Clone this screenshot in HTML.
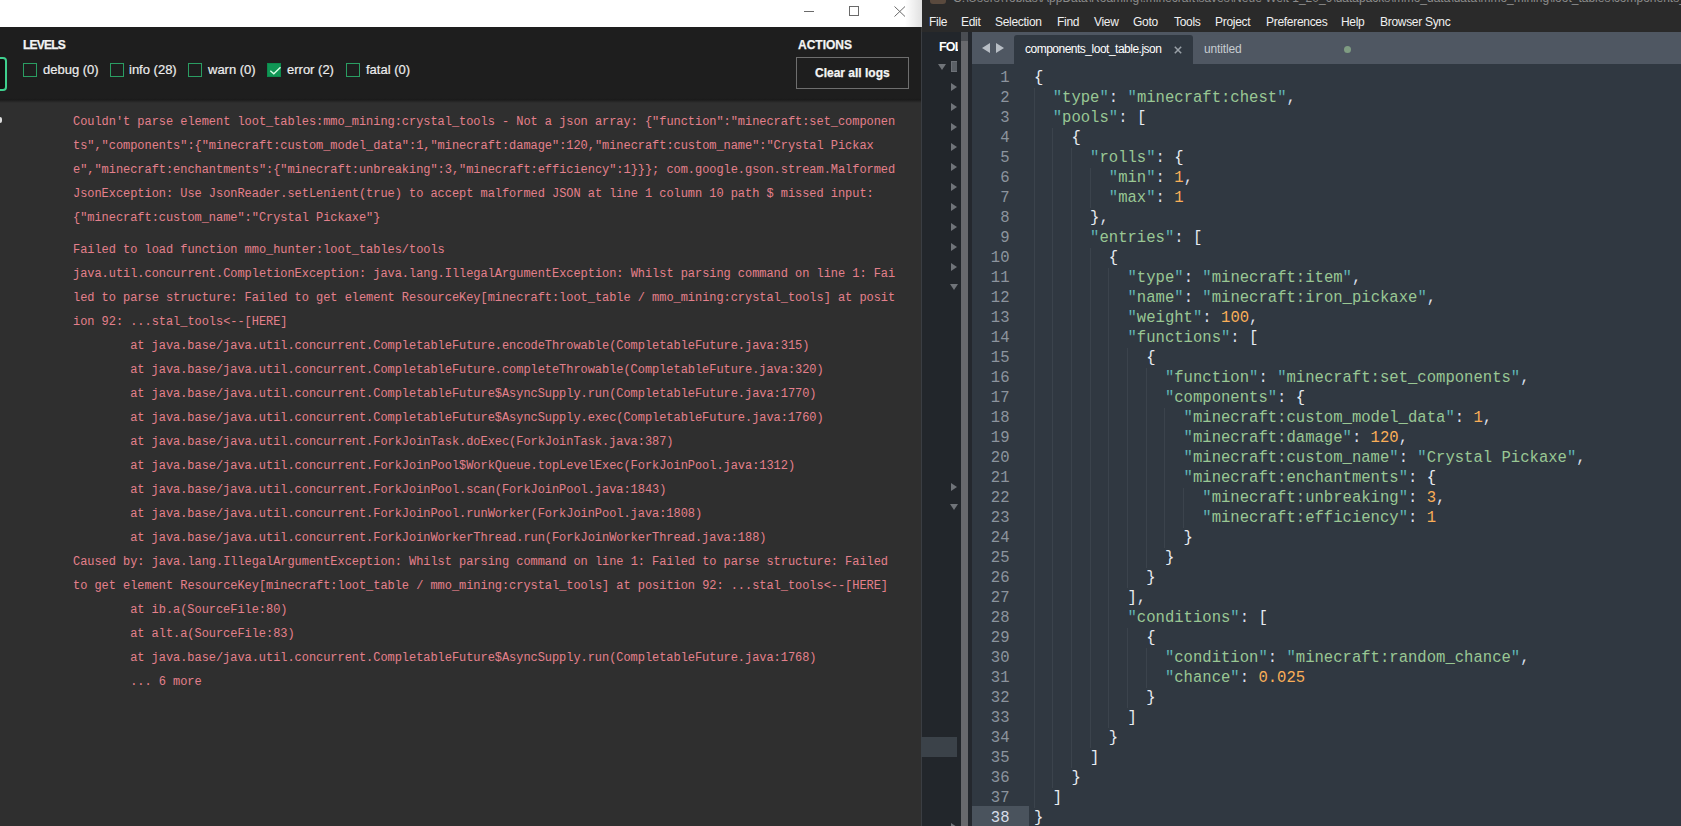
<!DOCTYPE html>
<html><head><meta charset="utf-8">
<style>
*{margin:0;padding:0;box-sizing:border-box}
html,body{width:1681px;height:826px;overflow:hidden;background:#1f1f1f}
body{position:relative;font-family:"Liberation Sans",sans-serif}
.a{position:absolute}
/* left window */
#ltitle{left:0;top:0;width:922px;height:27px;background:#fff}
#lhead{left:0;top:27px;width:921px;height:73px;background:#1e1e1e}
#llog{left:0;top:100px;width:921px;height:726px;background:#2f2f2f}
#lshadow{left:0;top:98px;width:921px;height:5px;background:linear-gradient(#1e1e1e,#1b1b1b 35%,#2f2f2f)}
#lborder{left:921px;top:27px;width:1px;height:799px;background:#3b3b3b}
.ll{position:absolute;white-space:pre;font-family:"Liberation Mono",monospace;font-size:12px;letter-spacing:-0.052px;line-height:24px;color:#e4808c}
.cb{position:absolute;top:63px;width:14px;height:14px;border:1px solid #2a9d62}
.cbl{position:absolute;top:60px;-webkit-text-stroke:0.2px #ededed;font-size:13px;line-height:20px;color:#ededed}
.hd{position:absolute;font-weight:bold;font-size:12px;line-height:14px;color:#f4f4f4;-webkit-text-stroke:0.25px #f4f4f4}
/* sublime */
#stitle{left:922px;top:0;width:759px;height:32px;background:#2a2a2a}
.mn{position:absolute;top:15px;font-size:12px;letter-spacing:-0.3px;line-height:14px;color:#f0f0f0}
#side{left:922px;top:32px;width:39px;height:794px;background:#22262b}
#sidel{left:921px;top:32px;width:1px;height:794px;background:#3a3d42}
#sbar{left:961px;top:32px;width:7px;height:794px;background:#68696d}
#sbar2{left:968px;top:32px;width:4px;height:794px;background:#24282e}
#tabs{left:972px;top:32px;width:709px;height:32px;background:#4f5762}
#editor{left:972px;top:64px;width:709px;height:762px;background:#303841}
#tab1{left:1014px;top:35px;width:179px;height:29px;background:#303841;border-radius:3px 3px 0 0}
.cl{position:absolute;white-space:pre;font-family:"Liberation Mono",monospace;font-size:15.58px;line-height:20px;color:#d8dee9}
.cl i{font-style:normal}
.q{color:#5fb4b4}.s{color:#99c794}.n{color:#f9ae58}.p{color:#d8dee9}.b{color:#e8ecf2}
.ln{position:absolute;left:972px;width:37.5px;text-align:right;white-space:pre;font-family:"Liberation Mono",monospace;font-size:15.58px;line-height:20px;color:#8c949e}
.ln.cur{color:#d8dee9}
#curln{left:972px;top:806px;width:57px;height:20px;background:#4a535d}
.g{position:absolute;width:1px;height:20px;background:#3b434c}
.tr{position:absolute;left:951px;width:0;height:0;border-top:4px solid transparent;border-bottom:4px solid transparent;border-left:6px solid #707479}
.td{position:absolute;width:0;height:0;border-left:4px solid transparent;border-right:4px solid transparent;border-top:6px solid #707479}
</style></head><body>
<!-- LEFT WINDOW -->
<div class="a" id="ltitle"></div>
<div class="a" style="left:804px;top:11px;width:10px;height:1px;background:#6a6a6a"></div>
<div class="a" style="left:849px;top:6px;width:10px;height:10px;border:1px solid #6a6a6a"></div>
<svg class="a" style="left:894px;top:6px" width="12" height="11" viewBox="0 0 12 11"><path d="M0.5 0.5L11 10.5M11 0.5L0.5 10.5" stroke="#6a6a6a" stroke-width="1" fill="none"/></svg>
<div class="a" style="left:905px;top:0;width:17px;height:27px;background:linear-gradient(90deg,rgba(0,0,0,0),rgba(0,0,0,0.12))"></div>
<div class="a" id="lhead"></div>
<div class="a" style="left:0;top:57px;width:7px;height:34px;border:2px solid #3fcf8e;border-left:none;border-radius:0 4px 4px 0;background:#111"></div>
<div class="hd" style="left:23px;top:38px;letter-spacing:-0.8px">LEVELS</div>
<div class="cb" style="left:23px"></div><div class="cbl" style="left:43px">debug (0)</div>
<div class="cb" style="left:110px"></div><div class="cbl" style="left:129px">info (28)</div>
<div class="cb" style="left:188px"></div><div class="cbl" style="left:208px">warn (0)</div>
<div class="cb" style="left:267px;background:#109655;border-color:#0c8a4c"></div>
<svg class="a" style="left:267px;top:63px" width="15" height="15" viewBox="0 0 15 15"><path d="M3.3 7.8L6.8 10.7L13.5 4.3" stroke="#d8ffe6" stroke-width="1.4" fill="none"/></svg>
<div class="cbl" style="left:287px">error (2)</div>
<div class="cb" style="left:346px"></div><div class="cbl" style="left:366px">fatal (0)</div>
<div class="hd" style="left:798px;top:38px">ACTIONS</div>
<div class="a" style="left:796px;top:57px;width:113px;height:32px;border:1px solid #6e6e6e"></div>
<div class="hd" style="left:815px;top:66px">Clear all logs</div>
<div class="a" id="llog"></div>
<div class="a" id="lshadow"></div>
<div class="a" style="left:0;top:117px;width:2px;height:6px;background:#ddd;border-radius:0 2px 2px 0"></div>
<div class="ll" style="left:73.00px;top:110px">Couldn&#x27;t parse element loot_tables:mmo_mining:crystal_tools - Not a json array: {&quot;function&quot;:&quot;minecraft:set_componen</div>
<div class="ll" style="left:73.00px;top:134px">ts&quot;,&quot;components&quot;:{&quot;minecraft:custom_model_data&quot;:1,&quot;minecraft:damage&quot;:120,&quot;minecraft:custom_name&quot;:&quot;Crystal Pickax</div>
<div class="ll" style="left:73.00px;top:158px">e&quot;,&quot;minecraft:enchantments&quot;:{&quot;minecraft:unbreaking&quot;:3,&quot;minecraft:efficiency&quot;:1}}}; com.google.gson.stream.Malformed</div>
<div class="ll" style="left:73.00px;top:182px">JsonException: Use JsonReader.setLenient(true) to accept malformed JSON at line 1 column 10 path $ missed input:</div>
<div class="ll" style="left:73.00px;top:206px">{&quot;minecraft:custom_name&quot;:&quot;Crystal Pickaxe&quot;}</div>
<div class="ll" style="left:73.00px;top:238px">Failed to load function mmo_hunter:loot_tables/tools</div>
<div class="ll" style="left:73.00px;top:262px">java.util.concurrent.CompletionException: java.lang.IllegalArgumentException: Whilst parsing command on line 1: Fai</div>
<div class="ll" style="left:73.00px;top:286px">led to parse structure: Failed to get element ResourceKey[minecraft:loot_table / mmo_mining:crystal_tools] at posit</div>
<div class="ll" style="left:73.00px;top:310px">ion 92: ...stal_tools&lt;--[HERE]</div>
<div class="ll" style="left:130.18px;top:334px">at java.base/java.util.concurrent.CompletableFuture.encodeThrowable(CompletableFuture.java:315)</div>
<div class="ll" style="left:130.18px;top:358px">at java.base/java.util.concurrent.CompletableFuture.completeThrowable(CompletableFuture.java:320)</div>
<div class="ll" style="left:130.18px;top:382px">at java.base/java.util.concurrent.CompletableFuture$AsyncSupply.run(CompletableFuture.java:1770)</div>
<div class="ll" style="left:130.18px;top:406px">at java.base/java.util.concurrent.CompletableFuture$AsyncSupply.exec(CompletableFuture.java:1760)</div>
<div class="ll" style="left:130.18px;top:430px">at java.base/java.util.concurrent.ForkJoinTask.doExec(ForkJoinTask.java:387)</div>
<div class="ll" style="left:130.18px;top:454px">at java.base/java.util.concurrent.ForkJoinPool$WorkQueue.topLevelExec(ForkJoinPool.java:1312)</div>
<div class="ll" style="left:130.18px;top:478px">at java.base/java.util.concurrent.ForkJoinPool.scan(ForkJoinPool.java:1843)</div>
<div class="ll" style="left:130.18px;top:502px">at java.base/java.util.concurrent.ForkJoinPool.runWorker(ForkJoinPool.java:1808)</div>
<div class="ll" style="left:130.18px;top:526px">at java.base/java.util.concurrent.ForkJoinWorkerThread.run(ForkJoinWorkerThread.java:188)</div>
<div class="ll" style="left:73.00px;top:550px">Caused by: java.lang.IllegalArgumentException: Whilst parsing command on line 1: Failed to parse structure: Failed</div>
<div class="ll" style="left:73.00px;top:574px">to get element ResourceKey[minecraft:loot_table / mmo_mining:crystal_tools] at position 92: ...stal_tools&lt;--[HERE]</div>
<div class="ll" style="left:130.18px;top:598px">at ib.a(SourceFile:80)</div>
<div class="ll" style="left:130.18px;top:622px">at alt.a(SourceFile:83)</div>
<div class="ll" style="left:130.18px;top:646px">at java.base/java.util.concurrent.CompletableFuture$AsyncSupply.run(CompletableFuture.java:1768)</div>
<div class="ll" style="left:130.18px;top:670px">... 6 more</div>
<div class="a" id="lborder"></div>
<!-- SUBLIME -->
<div class="a" id="stitle"></div>
<div class="a" style="left:930px;top:0;width:16px;height:4px;background:#5a4a3e;border-radius:0 0 3px 3px"></div>
<div class="a" style="left:953px;top:-9px;font-size:12px;line-height:14px;color:#8c8c8c;white-space:pre">C:\Users\Tobias\AppData\Roaming\.minecraft\saves\Neue Welt 1_20_6\datapacks\mmo_data\data\mmo_mining\loot_tables\components_loot_table.json - Sublime Text</div>
<div class="mn" style="left:929px">File</div>
<div class="mn" style="left:961px">Edit</div>
<div class="mn" style="left:995px">Selection</div>
<div class="mn" style="left:1057px">Find</div>
<div class="mn" style="left:1094px">View</div>
<div class="mn" style="left:1133px">Goto</div>
<div class="mn" style="left:1174px">Tools</div>
<div class="mn" style="left:1215px">Project</div>
<div class="mn" style="left:1266px">Preferences</div>
<div class="mn" style="left:1341px">Help</div>
<div class="mn" style="left:1380px">Browser Sync</div>
<div class="a" id="side"></div>
<div class="a" id="sidel"></div>
<div class="a" style="left:939px;top:40px;font-weight:bold;font-size:12.5px;letter-spacing:-0.8px;line-height:14px;color:#fff;width:19px;overflow:hidden;white-space:pre">FOLDERS</div>
<div class="td" style="left:938px;top:64px"></div>
<div class="a" style="left:951px;top:61px;width:6px;height:11px;border:1px solid #6d7177;border-right:none;background:#5b6066"></div>
<div class="tr" style="top:83px"></div>
<div class="tr" style="top:103px"></div>
<div class="tr" style="top:123px"></div>
<div class="tr" style="top:143px"></div>
<div class="tr" style="top:163px"></div>
<div class="tr" style="top:183px"></div>
<div class="tr" style="top:203px"></div>
<div class="tr" style="top:223px"></div>
<div class="tr" style="top:243px"></div>
<div class="tr" style="top:263px"></div>
<div class="tr" style="top:483px"></div>
<div class="tr" style="top:823px"></div>
<div class="td" style="top:284px;left:950px"></div>
<div class="td" style="top:504px;left:950px"></div>
<div class="a" style="left:921px;top:737px;width:36px;height:20px;background:#3b4249"></div>
<div class="a" id="sbar"></div>
<div class="a" style="left:961px;top:32px;width:7px;height:9px;background:#4a4d52"></div>
<div class="a" id="sbar2"></div>
<div class="a" id="tabs"></div>
<svg class="a" style="left:980px;top:41px" width="26" height="14" viewBox="0 0 26 14"><path d="M10 2L2 7L10 12Z M16 2L24 7L16 12Z" fill="#b8bec5"/></svg>
<div class="a" id="tab1"></div>
<div class="a" style="left:1025px;top:42px;font-size:12px;letter-spacing:-0.5px;line-height:14px;color:#fff;white-space:pre">components_loot_table.json</div>
<svg class="a" style="left:1174px;top:46px" width="8" height="8" viewBox="0 0 8 8"><path d="M0.8 0.8L7.2 7.2M7.2 0.8L0.8 7.2" stroke="#9aa1a8" stroke-width="1.5"/></svg>
<div class="a" style="left:1204px;top:42px;font-size:12px;letter-spacing:-0.15px;line-height:14px;color:#c7ccd1;white-space:pre">untitled</div>
<div class="a" style="left:1344px;top:46px;width:7px;height:7px;border-radius:50%;background:#7f9c82"></div>
<div class="a" id="editor"></div>
<div class="a" id="curln"></div>
<div class="g" style="left:1034px;top:88px"></div>
<div class="g" style="left:1034px;top:108px"></div>
<div class="g" style="left:1034px;top:128px"></div>
<div class="g" style="left:1052px;top:128px"></div>
<div class="g" style="left:1034px;top:148px"></div>
<div class="g" style="left:1052px;top:148px"></div>
<div class="g" style="left:1071px;top:148px"></div>
<div class="g" style="left:1034px;top:168px"></div>
<div class="g" style="left:1052px;top:168px"></div>
<div class="g" style="left:1071px;top:168px"></div>
<div class="g" style="left:1090px;top:168px"></div>
<div class="g" style="left:1034px;top:188px"></div>
<div class="g" style="left:1052px;top:188px"></div>
<div class="g" style="left:1071px;top:188px"></div>
<div class="g" style="left:1090px;top:188px"></div>
<div class="g" style="left:1034px;top:208px"></div>
<div class="g" style="left:1052px;top:208px"></div>
<div class="g" style="left:1071px;top:208px"></div>
<div class="g" style="left:1034px;top:228px"></div>
<div class="g" style="left:1052px;top:228px"></div>
<div class="g" style="left:1071px;top:228px"></div>
<div class="g" style="left:1034px;top:248px"></div>
<div class="g" style="left:1052px;top:248px"></div>
<div class="g" style="left:1071px;top:248px"></div>
<div class="g" style="left:1090px;top:248px"></div>
<div class="g" style="left:1034px;top:268px"></div>
<div class="g" style="left:1052px;top:268px"></div>
<div class="g" style="left:1071px;top:268px"></div>
<div class="g" style="left:1090px;top:268px"></div>
<div class="g" style="left:1108px;top:268px"></div>
<div class="g" style="left:1034px;top:288px"></div>
<div class="g" style="left:1052px;top:288px"></div>
<div class="g" style="left:1071px;top:288px"></div>
<div class="g" style="left:1090px;top:288px"></div>
<div class="g" style="left:1108px;top:288px"></div>
<div class="g" style="left:1034px;top:308px"></div>
<div class="g" style="left:1052px;top:308px"></div>
<div class="g" style="left:1071px;top:308px"></div>
<div class="g" style="left:1090px;top:308px"></div>
<div class="g" style="left:1108px;top:308px"></div>
<div class="g" style="left:1034px;top:328px"></div>
<div class="g" style="left:1052px;top:328px"></div>
<div class="g" style="left:1071px;top:328px"></div>
<div class="g" style="left:1090px;top:328px"></div>
<div class="g" style="left:1108px;top:328px"></div>
<div class="g" style="left:1034px;top:348px"></div>
<div class="g" style="left:1052px;top:348px"></div>
<div class="g" style="left:1071px;top:348px"></div>
<div class="g" style="left:1090px;top:348px"></div>
<div class="g" style="left:1108px;top:348px"></div>
<div class="g" style="left:1127px;top:348px"></div>
<div class="g" style="left:1034px;top:368px"></div>
<div class="g" style="left:1052px;top:368px"></div>
<div class="g" style="left:1071px;top:368px"></div>
<div class="g" style="left:1090px;top:368px"></div>
<div class="g" style="left:1108px;top:368px"></div>
<div class="g" style="left:1127px;top:368px"></div>
<div class="g" style="left:1146px;top:368px"></div>
<div class="g" style="left:1034px;top:388px"></div>
<div class="g" style="left:1052px;top:388px"></div>
<div class="g" style="left:1071px;top:388px"></div>
<div class="g" style="left:1090px;top:388px"></div>
<div class="g" style="left:1108px;top:388px"></div>
<div class="g" style="left:1127px;top:388px"></div>
<div class="g" style="left:1146px;top:388px"></div>
<div class="g" style="left:1034px;top:408px"></div>
<div class="g" style="left:1052px;top:408px"></div>
<div class="g" style="left:1071px;top:408px"></div>
<div class="g" style="left:1090px;top:408px"></div>
<div class="g" style="left:1108px;top:408px"></div>
<div class="g" style="left:1127px;top:408px"></div>
<div class="g" style="left:1146px;top:408px"></div>
<div class="g" style="left:1164px;top:408px"></div>
<div class="g" style="left:1034px;top:428px"></div>
<div class="g" style="left:1052px;top:428px"></div>
<div class="g" style="left:1071px;top:428px"></div>
<div class="g" style="left:1090px;top:428px"></div>
<div class="g" style="left:1108px;top:428px"></div>
<div class="g" style="left:1127px;top:428px"></div>
<div class="g" style="left:1146px;top:428px"></div>
<div class="g" style="left:1164px;top:428px"></div>
<div class="g" style="left:1034px;top:448px"></div>
<div class="g" style="left:1052px;top:448px"></div>
<div class="g" style="left:1071px;top:448px"></div>
<div class="g" style="left:1090px;top:448px"></div>
<div class="g" style="left:1108px;top:448px"></div>
<div class="g" style="left:1127px;top:448px"></div>
<div class="g" style="left:1146px;top:448px"></div>
<div class="g" style="left:1164px;top:448px"></div>
<div class="g" style="left:1034px;top:468px"></div>
<div class="g" style="left:1052px;top:468px"></div>
<div class="g" style="left:1071px;top:468px"></div>
<div class="g" style="left:1090px;top:468px"></div>
<div class="g" style="left:1108px;top:468px"></div>
<div class="g" style="left:1127px;top:468px"></div>
<div class="g" style="left:1146px;top:468px"></div>
<div class="g" style="left:1164px;top:468px"></div>
<div class="g" style="left:1034px;top:488px"></div>
<div class="g" style="left:1052px;top:488px"></div>
<div class="g" style="left:1071px;top:488px"></div>
<div class="g" style="left:1090px;top:488px"></div>
<div class="g" style="left:1108px;top:488px"></div>
<div class="g" style="left:1127px;top:488px"></div>
<div class="g" style="left:1146px;top:488px"></div>
<div class="g" style="left:1164px;top:488px"></div>
<div class="g" style="left:1183px;top:488px"></div>
<div class="g" style="left:1034px;top:508px"></div>
<div class="g" style="left:1052px;top:508px"></div>
<div class="g" style="left:1071px;top:508px"></div>
<div class="g" style="left:1090px;top:508px"></div>
<div class="g" style="left:1108px;top:508px"></div>
<div class="g" style="left:1127px;top:508px"></div>
<div class="g" style="left:1146px;top:508px"></div>
<div class="g" style="left:1164px;top:508px"></div>
<div class="g" style="left:1183px;top:508px"></div>
<div class="g" style="left:1034px;top:528px"></div>
<div class="g" style="left:1052px;top:528px"></div>
<div class="g" style="left:1071px;top:528px"></div>
<div class="g" style="left:1090px;top:528px"></div>
<div class="g" style="left:1108px;top:528px"></div>
<div class="g" style="left:1127px;top:528px"></div>
<div class="g" style="left:1146px;top:528px"></div>
<div class="g" style="left:1164px;top:528px"></div>
<div class="g" style="left:1034px;top:548px"></div>
<div class="g" style="left:1052px;top:548px"></div>
<div class="g" style="left:1071px;top:548px"></div>
<div class="g" style="left:1090px;top:548px"></div>
<div class="g" style="left:1108px;top:548px"></div>
<div class="g" style="left:1127px;top:548px"></div>
<div class="g" style="left:1146px;top:548px"></div>
<div class="g" style="left:1034px;top:568px"></div>
<div class="g" style="left:1052px;top:568px"></div>
<div class="g" style="left:1071px;top:568px"></div>
<div class="g" style="left:1090px;top:568px"></div>
<div class="g" style="left:1108px;top:568px"></div>
<div class="g" style="left:1127px;top:568px"></div>
<div class="g" style="left:1034px;top:588px"></div>
<div class="g" style="left:1052px;top:588px"></div>
<div class="g" style="left:1071px;top:588px"></div>
<div class="g" style="left:1090px;top:588px"></div>
<div class="g" style="left:1108px;top:588px"></div>
<div class="g" style="left:1034px;top:608px"></div>
<div class="g" style="left:1052px;top:608px"></div>
<div class="g" style="left:1071px;top:608px"></div>
<div class="g" style="left:1090px;top:608px"></div>
<div class="g" style="left:1108px;top:608px"></div>
<div class="g" style="left:1034px;top:628px"></div>
<div class="g" style="left:1052px;top:628px"></div>
<div class="g" style="left:1071px;top:628px"></div>
<div class="g" style="left:1090px;top:628px"></div>
<div class="g" style="left:1108px;top:628px"></div>
<div class="g" style="left:1127px;top:628px"></div>
<div class="g" style="left:1034px;top:648px"></div>
<div class="g" style="left:1052px;top:648px"></div>
<div class="g" style="left:1071px;top:648px"></div>
<div class="g" style="left:1090px;top:648px"></div>
<div class="g" style="left:1108px;top:648px"></div>
<div class="g" style="left:1127px;top:648px"></div>
<div class="g" style="left:1146px;top:648px"></div>
<div class="g" style="left:1034px;top:668px"></div>
<div class="g" style="left:1052px;top:668px"></div>
<div class="g" style="left:1071px;top:668px"></div>
<div class="g" style="left:1090px;top:668px"></div>
<div class="g" style="left:1108px;top:668px"></div>
<div class="g" style="left:1127px;top:668px"></div>
<div class="g" style="left:1146px;top:668px"></div>
<div class="g" style="left:1034px;top:688px"></div>
<div class="g" style="left:1052px;top:688px"></div>
<div class="g" style="left:1071px;top:688px"></div>
<div class="g" style="left:1090px;top:688px"></div>
<div class="g" style="left:1108px;top:688px"></div>
<div class="g" style="left:1127px;top:688px"></div>
<div class="g" style="left:1034px;top:708px"></div>
<div class="g" style="left:1052px;top:708px"></div>
<div class="g" style="left:1071px;top:708px"></div>
<div class="g" style="left:1090px;top:708px"></div>
<div class="g" style="left:1108px;top:708px"></div>
<div class="g" style="left:1034px;top:728px"></div>
<div class="g" style="left:1052px;top:728px"></div>
<div class="g" style="left:1071px;top:728px"></div>
<div class="g" style="left:1090px;top:728px"></div>
<div class="g" style="left:1034px;top:748px"></div>
<div class="g" style="left:1052px;top:748px"></div>
<div class="g" style="left:1071px;top:748px"></div>
<div class="g" style="left:1034px;top:768px"></div>
<div class="g" style="left:1052px;top:768px"></div>
<div class="g" style="left:1034px;top:788px"></div>
<div class="cl" style="left:1034.00px;top:68px"><i class="b">{</i></div>
<div class="ln" style="top:68px">1</div>
<div class="cl" style="left:1052.70px;top:88px"><i class="q">"</i><i class="s">type</i><i class="q">"</i><i class="p">:</i> <i class="q">"</i><i class="s">minecraft:chest</i><i class="q">"</i><i class="p">,</i></div>
<div class="ln" style="top:88px">2</div>
<div class="cl" style="left:1052.70px;top:108px"><i class="q">"</i><i class="s">pools</i><i class="q">"</i><i class="p">:</i> <i class="b">[</i></div>
<div class="ln" style="top:108px">3</div>
<div class="cl" style="left:1071.40px;top:128px"><i class="b">{</i></div>
<div class="ln" style="top:128px">4</div>
<div class="cl" style="left:1090.10px;top:148px"><i class="q">"</i><i class="s">rolls</i><i class="q">"</i><i class="p">:</i> <i class="b">{</i></div>
<div class="ln" style="top:148px">5</div>
<div class="cl" style="left:1108.80px;top:168px"><i class="q">"</i><i class="s">min</i><i class="q">"</i><i class="p">:</i> <i class="n">1</i><i class="p">,</i></div>
<div class="ln" style="top:168px">6</div>
<div class="cl" style="left:1108.80px;top:188px"><i class="q">"</i><i class="s">max</i><i class="q">"</i><i class="p">:</i> <i class="n">1</i></div>
<div class="ln" style="top:188px">7</div>
<div class="cl" style="left:1090.10px;top:208px"><i class="b">}</i><i class="p">,</i></div>
<div class="ln" style="top:208px">8</div>
<div class="cl" style="left:1090.10px;top:228px"><i class="q">"</i><i class="s">entries</i><i class="q">"</i><i class="p">:</i> <i class="b">[</i></div>
<div class="ln" style="top:228px">9</div>
<div class="cl" style="left:1108.80px;top:248px"><i class="b">{</i></div>
<div class="ln" style="top:248px">10</div>
<div class="cl" style="left:1127.50px;top:268px"><i class="q">"</i><i class="s">type</i><i class="q">"</i><i class="p">:</i> <i class="q">"</i><i class="s">minecraft:item</i><i class="q">"</i><i class="p">,</i></div>
<div class="ln" style="top:268px">11</div>
<div class="cl" style="left:1127.50px;top:288px"><i class="q">"</i><i class="s">name</i><i class="q">"</i><i class="p">:</i> <i class="q">"</i><i class="s">minecraft:iron_pickaxe</i><i class="q">"</i><i class="p">,</i></div>
<div class="ln" style="top:288px">12</div>
<div class="cl" style="left:1127.50px;top:308px"><i class="q">"</i><i class="s">weight</i><i class="q">"</i><i class="p">:</i> <i class="n">100</i><i class="p">,</i></div>
<div class="ln" style="top:308px">13</div>
<div class="cl" style="left:1127.50px;top:328px"><i class="q">"</i><i class="s">functions</i><i class="q">"</i><i class="p">:</i> <i class="b">[</i></div>
<div class="ln" style="top:328px">14</div>
<div class="cl" style="left:1146.20px;top:348px"><i class="b">{</i></div>
<div class="ln" style="top:348px">15</div>
<div class="cl" style="left:1164.90px;top:368px"><i class="q">"</i><i class="s">function</i><i class="q">"</i><i class="p">:</i> <i class="q">"</i><i class="s">minecraft:set_components</i><i class="q">"</i><i class="p">,</i></div>
<div class="ln" style="top:368px">16</div>
<div class="cl" style="left:1164.90px;top:388px"><i class="q">"</i><i class="s">components</i><i class="q">"</i><i class="p">:</i> <i class="b">{</i></div>
<div class="ln" style="top:388px">17</div>
<div class="cl" style="left:1183.60px;top:408px"><i class="q">"</i><i class="s">minecraft:custom_model_data</i><i class="q">"</i><i class="p">:</i> <i class="n">1</i><i class="p">,</i></div>
<div class="ln" style="top:408px">18</div>
<div class="cl" style="left:1183.60px;top:428px"><i class="q">"</i><i class="s">minecraft:damage</i><i class="q">"</i><i class="p">:</i> <i class="n">120</i><i class="p">,</i></div>
<div class="ln" style="top:428px">19</div>
<div class="cl" style="left:1183.60px;top:448px"><i class="q">"</i><i class="s">minecraft:custom_name</i><i class="q">"</i><i class="p">:</i> <i class="q">"</i><i class="s">Crystal Pickaxe</i><i class="q">"</i><i class="p">,</i></div>
<div class="ln" style="top:448px">20</div>
<div class="cl" style="left:1183.60px;top:468px"><i class="q">"</i><i class="s">minecraft:enchantments</i><i class="q">"</i><i class="p">:</i> <i class="b">{</i></div>
<div class="ln" style="top:468px">21</div>
<div class="cl" style="left:1202.30px;top:488px"><i class="q">"</i><i class="s">minecraft:unbreaking</i><i class="q">"</i><i class="p">:</i> <i class="n">3</i><i class="p">,</i></div>
<div class="ln" style="top:488px">22</div>
<div class="cl" style="left:1202.30px;top:508px"><i class="q">"</i><i class="s">minecraft:efficiency</i><i class="q">"</i><i class="p">:</i> <i class="n">1</i></div>
<div class="ln" style="top:508px">23</div>
<div class="cl" style="left:1183.60px;top:528px"><i class="b">}</i></div>
<div class="ln" style="top:528px">24</div>
<div class="cl" style="left:1164.90px;top:548px"><i class="b">}</i></div>
<div class="ln" style="top:548px">25</div>
<div class="cl" style="left:1146.20px;top:568px"><i class="b">}</i></div>
<div class="ln" style="top:568px">26</div>
<div class="cl" style="left:1127.50px;top:588px"><i class="b">]</i><i class="p">,</i></div>
<div class="ln" style="top:588px">27</div>
<div class="cl" style="left:1127.50px;top:608px"><i class="q">"</i><i class="s">conditions</i><i class="q">"</i><i class="p">:</i> <i class="b">[</i></div>
<div class="ln" style="top:608px">28</div>
<div class="cl" style="left:1146.20px;top:628px"><i class="b">{</i></div>
<div class="ln" style="top:628px">29</div>
<div class="cl" style="left:1164.90px;top:648px"><i class="q">"</i><i class="s">condition</i><i class="q">"</i><i class="p">:</i> <i class="q">"</i><i class="s">minecraft:random_chance</i><i class="q">"</i><i class="p">,</i></div>
<div class="ln" style="top:648px">30</div>
<div class="cl" style="left:1164.90px;top:668px"><i class="q">"</i><i class="s">chance</i><i class="q">"</i><i class="p">:</i> <i class="n">0.025</i></div>
<div class="ln" style="top:668px">31</div>
<div class="cl" style="left:1146.20px;top:688px"><i class="b">}</i></div>
<div class="ln" style="top:688px">32</div>
<div class="cl" style="left:1127.50px;top:708px"><i class="b">]</i></div>
<div class="ln" style="top:708px">33</div>
<div class="cl" style="left:1108.80px;top:728px"><i class="b">}</i></div>
<div class="ln" style="top:728px">34</div>
<div class="cl" style="left:1090.10px;top:748px"><i class="b">]</i></div>
<div class="ln" style="top:748px">35</div>
<div class="cl" style="left:1071.40px;top:768px"><i class="b">}</i></div>
<div class="ln" style="top:768px">36</div>
<div class="cl" style="left:1052.70px;top:788px"><i class="b">]</i></div>
<div class="ln" style="top:788px">37</div>
<div class="cl" style="left:1034.00px;top:808px"><i class="b">}</i></div>
<div class="ln cur" style="top:808px">38</div>
</body></html>
